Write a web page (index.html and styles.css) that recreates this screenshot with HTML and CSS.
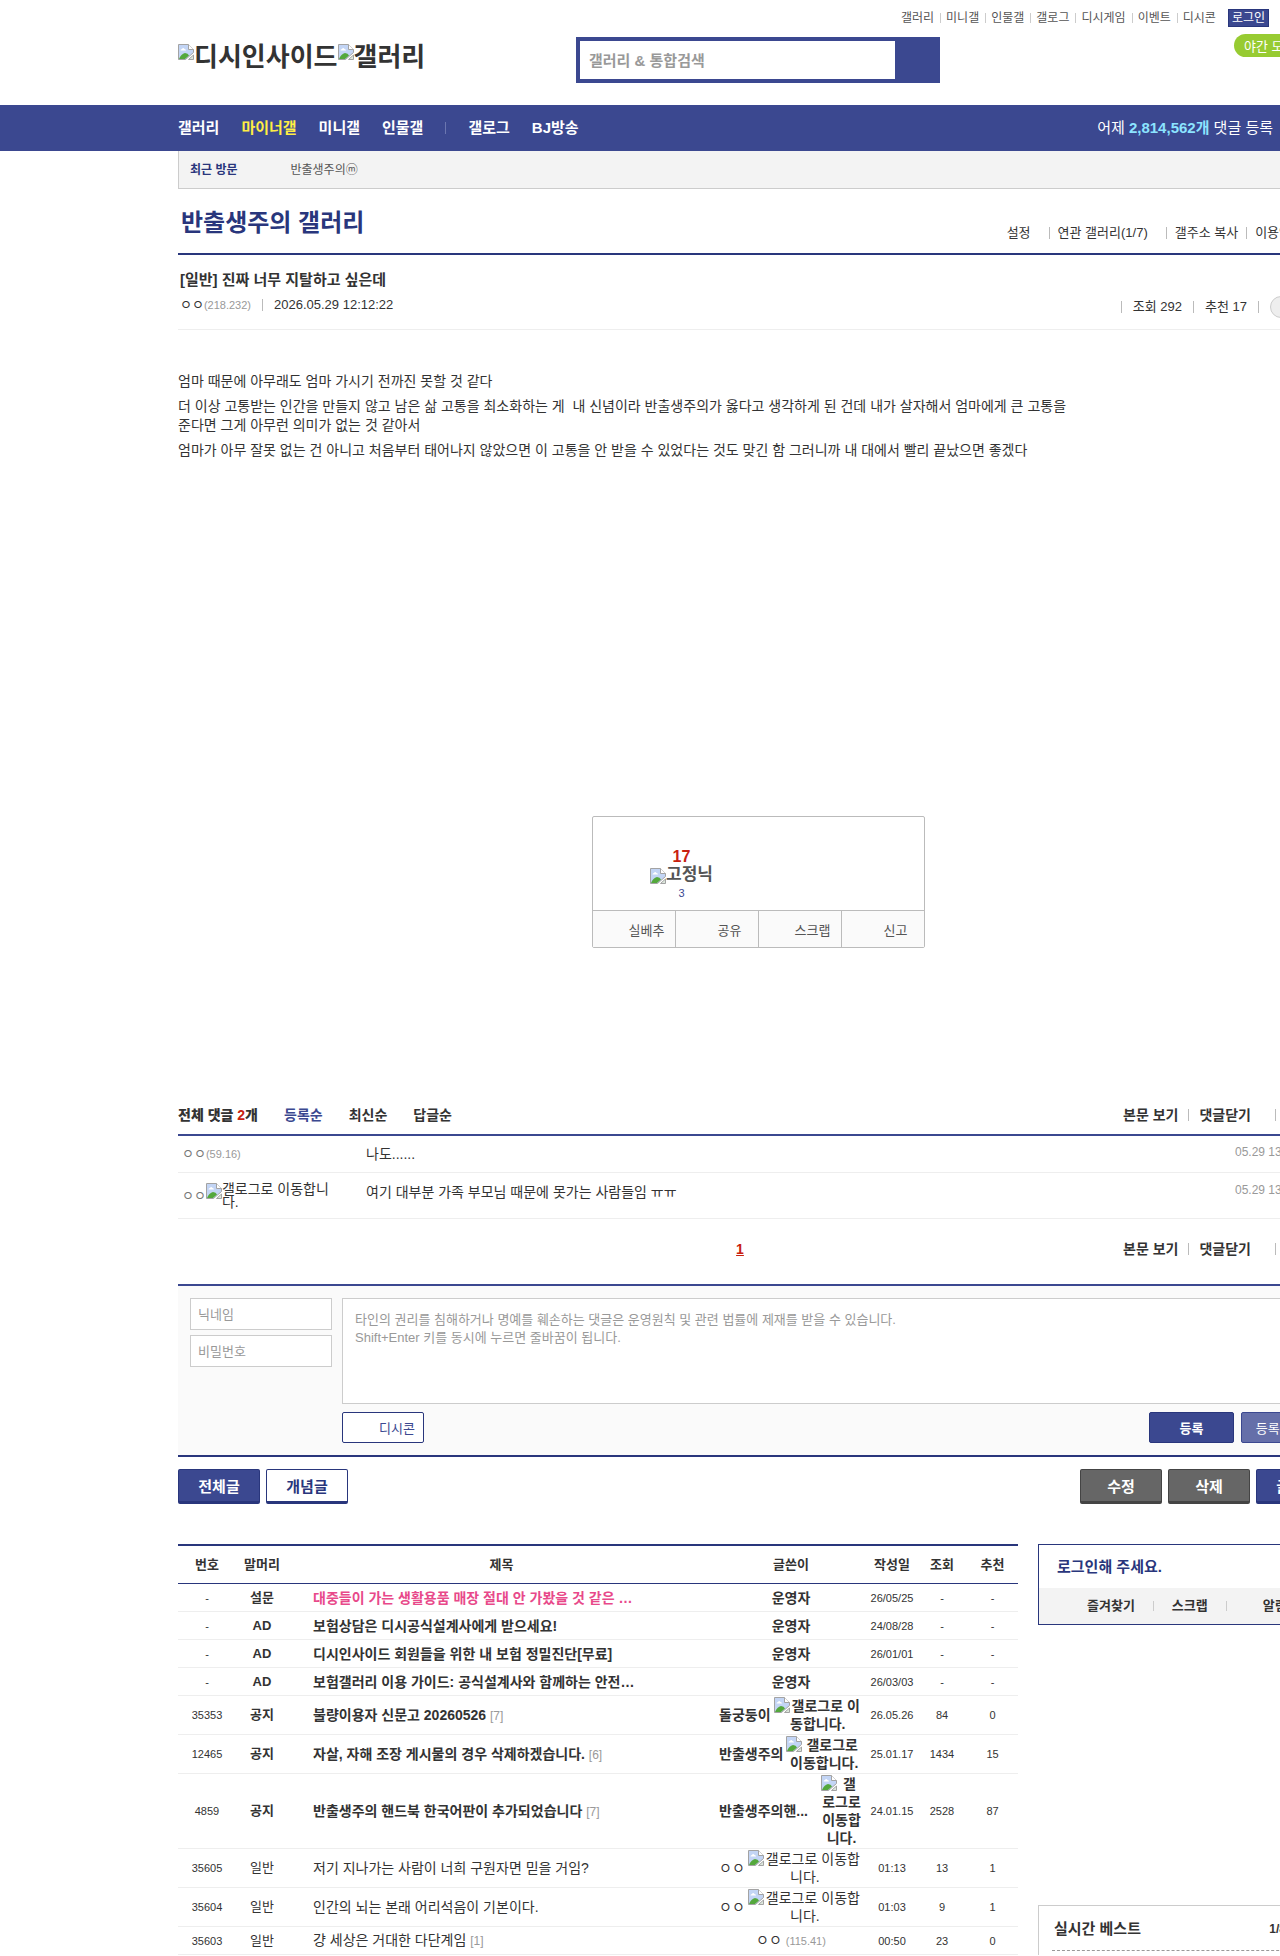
FILE: index.html
```html
<!DOCTYPE html>
<html lang="ko">
<head>
  <meta charset="utf-8">
  <title>반출생주의 갤러리</title>
  <link rel="stylesheet" href="styles.css">
</head>
<body>
  <svg class="defs" aria-hidden="true">
    <symbol id="noimg" viewBox="0 0 16 16">
      <path d="M.5.5h10l5 5v3l-8 7h-7z" fill="#c3d5f5" stroke="#a3a3a3"/>
      <path d="M2.5 6.5q0-1.500 1.500-1.500q1-2 2.500 0q1.500 0 1.500 1.500z" fill="#fff"/>
      <path d="M1 15q2-5 6-6q3 0 4 2.500l-4 3.500z" fill="#54a83c"/>
      <path d="M10.500.5v5h5" fill="#fff" stroke="#a3a3a3"/>
      <path d="M15.500 11v4.500h-5z" fill="#dce7dc" stroke="#a3a3a3"/>
    </symbol>
  </svg>

  <header class="wrap">
    <ul class="util">
      <li><a href="#">갤러리</a></li>
      <li><a href="#">미니갤</a></li>
      <li><a href="#">인물갤</a></li>
      <li><a href="#">갤로그</a></li>
      <li><a href="#">디시게임</a></li>
      <li><a href="#">이벤트</a></li>
      <li><a href="#">디시콘</a></li>
      <li class="login"><a href="#">로그인</a></li>
    </ul>
    <div class="head">
      <h1 class="logo"><a href="#"><svg><use href="#noimg"/></svg>디시인사이드</a><a href="#"><svg><use href="#noimg"/></svg>갤러리</a></h1>
      <form class="search">
        <input type="text" placeholder="갤러리 &amp; 통합검색" aria-label="갤러리 &amp; 통합검색">
        <button type="button" aria-label="검색"></button>
      </form>
      <button type="button" class="night">야간 모드</button>
    </div>
  </header>

  <nav class="gnb">
    <div class="wrap gnb-in">
      <a href="#">갤러리</a>
      <a href="#" class="on">마이너갤</a>
      <a href="#">미니갤</a>
      <a href="#">인물갤</a>
      <i></i>
      <a href="#">갤로그</a>
      <a href="#">BJ방송</a>
      <p>어제 <b>2,814,562개</b> 댓글 등록</p>
    </div>
  </nav>

  <div class="wrap">
    <div class="visit"><b>최근 방문</b><a href="#">반출생주의ⓜ</a></div>

    <div class="gall-head">
      <h2><a href="#">반출생주의 갤러리</a></h2>
      <ul class="bar opts">
        <li class="wide"><a href="#">설정</a></li>
        <li class="wide"><a href="#">연관 갤러리(1/7)</a></li>
        <li><a href="#">갤주소 복사</a></li>
        <li><a href="#">이용안내</a></li>
      </ul>
    </div>

    <article>
      <div class="view-head">
        <h3>[일반] 진짜 너무 지탈하고 싶은데</h3>
        <div class="meta">
          <span>ㅇㅇ<small>(218.232)</small></span>
          <span class="date">2026.05.29 12:12:22</span>
          <ul class="bar count">
            <li>조회 292</li>
            <li>추천 17</li>
            <li><a href="#" class="pill"></a></li>
          </ul>
        </div>
      </div>
      <div class="post">
        <p>엄마 때문에 아무래도 엄마 가시기 전까진 못할 것 같다</p>
        <p>더 이상 고통받는 인간을 만들지 않고 남은 삶 고통을 최소화하는 게&nbsp; 내 신념이라 반출생주의가 옳다고 생각하게 된 건데 내가 살자해서 엄마에게 큰 고통을 준다면 그게 아무런 의미가 없는 것 같아서</p>
        <p>엄마가 아무 잘못 없는 건 아니고 처음부터 태어나지 않았으면 이 고통을 안 받을 수 있었다는 것도 맞긴 함 그러니까 내 대에서 빨리 끝났으면 좋겠다</p>
      </div>
      <div class="vote">
        <div class="vote-num">
          <strong>17</strong>
          <b><svg><use href="#noimg"/></svg>고정닉</b>
          <small>3</small>
        </div>
        <div class="vote-btns">
          <button type="button">실베추</button>
          <button type="button">공유</button>
          <button type="button">스크랩</button>
          <button type="button">신고</button>
        </div>
      </div>
    </article>

    <section class="comments">
      <div class="cmt-head">
        <b>전체 댓글 <em>2</em>개</b>
        <a href="#" class="on">등록순</a>
        <a href="#">최신순</a>
        <a href="#">답글순</a>
        <ul class="bar cmt-opts">
          <li><a href="#">본문 보기</a></li>
          <li class="wide"><a href="#">댓글닫기</a></li>
          <li></li>
        </ul>
      </div>
      <ul class="cmt-list">
        <li>
          <div class="nick">ㅇㅇ<small>(59.16)</small></div>
          <p>나도......</p>
          <time>05.29 13:03:21</time>
        </li>
        <li>
          <div class="nick two">ㅇㅇ<span class="alt"><svg><use href="#noimg"/></svg><span>갤로그로 이동합니다.</span></span></div>
          <p>여기 대부분 가족 부모님 때문에 못가는 사람들임 ㅠㅠ</p>
          <time>05.29 13:10:45</time>
        </li>
      </ul>
      <div class="cmt-foot">
        <a href="#" class="page">1</a>
        <ul class="bar cmt-opts">
          <li><a href="#">본문 보기</a></li>
          <li class="wide"><a href="#">댓글닫기</a></li>
          <li></li>
        </ul>
      </div>
      <form class="write">
        <div class="who">
          <input type="text" placeholder="닉네임" aria-label="닉네임">
          <input type="password" placeholder="비밀번호" aria-label="비밀번호">
        </div>
        <div class="body">
          <textarea aria-label="댓글" placeholder="타인의 권리를 침해하거나 명예를 훼손하는 댓글은 운영원칙 및 관련 법률에 제재를 받을 수 있습니다.&#10;Shift+Enter 키를 동시에 누르면 줄바꿈이 됩니다."></textarea>
          <div class="write-btns">
            <button type="button" class="dccon">디시콘</button>
            <button type="button" class="send">등록</button>
            <button type="button" class="send up">등록+추천</button>
          </div>
        </div>
      </form>
    </section>

    <div class="btns">
      <button type="button" class="btn">전체글</button>
      <button type="button" class="btn white">개념글</button>
      <span></span>
      <button type="button" class="btn gray">수정</button>
      <button type="button" class="btn gray">삭제</button>
      <button type="button" class="btn">글쓰기</button>
    </div>

    <div class="bottom">
      <table class="list">
        <colgroup><col class="c-num"><col class="c-sub"><col><col class="c-writer"><col class="c-s"><col class="c-s"><col class="c-last"></colgroup>
        <thead>
          <tr><th>번호</th><th>말머리</th><th>제목</th><th>글쓴이</th><th>작성일</th><th>조회</th><th>추천</th></tr>
        </thead>
        <tbody>
          <tr class="notice"><td>-</td><td>설문</td><td><a href="#" class="pink">대중들이 가는 생활용품 매장 절대 안 가봤을 것 같은 …</a></td><td>운영자</td><td>26/05/25</td><td>-</td><td>-</td></tr>
          <tr class="notice"><td>-</td><td>AD</td><td><a href="#">보험상담은 디시공식설계사에게 받으세요!</a></td><td>운영자</td><td>24/08/28</td><td>-</td><td>-</td></tr>
          <tr class="notice"><td>-</td><td>AD</td><td><a href="#">디시인사이드 회원들을 위한 내 보험 정밀진단[무료]</a></td><td>운영자</td><td>26/01/01</td><td>-</td><td>-</td></tr>
          <tr class="notice"><td>-</td><td>AD</td><td><a href="#">보험갤러리 이용 가이드: 공식설계사와 함께하는 안전…</a></td><td>운영자</td><td>26/03/03</td><td>-</td><td>-</td></tr>
          <tr class="notice"><td>35353</td><td>공지</td><td><a href="#">불량이용자 신문고 20260526</a> <small>[7]</small></td><td><div class="writer"><span>돌궁둥이</span><div><svg><use href="#noimg"/></svg>갤로그로 이동합니다.</div></div></td><td>26.05.26</td><td>84</td><td>0</td></tr>
          <tr class="notice"><td>12465</td><td>공지</td><td><a href="#">자살, 자해 조장 게시물의 경우 삭제하겠습니다.</a> <small>[6]</small></td><td><div class="writer"><span>반출생주의</span><div><svg><use href="#noimg"/></svg>갤로그로 이동합니다.</div></div></td><td>25.01.17</td><td>1434</td><td>15</td></tr>
          <tr class="notice"><td>4859</td><td>공지</td><td><a href="#">반출생주의 핸드북 한국어판이 추가되었습니다</a> <small>[7]</small></td><td><div class="writer"><span class="long">반출생주의핸...</span><div><svg><use href="#noimg"/></svg>갤로그로 이동합니다.</div></div></td><td>24.01.15</td><td>2528</td><td>87</td></tr>
          <tr><td>35605</td><td>일반</td><td><a href="#">저기 지나가는 사람이 너희 구원자면 믿을 거임?</a></td><td><div class="writer"><span>ㅇㅇ</span><div><svg><use href="#noimg"/></svg>갤로그로 이동합니다.</div></div></td><td>01:13</td><td>13</td><td>1</td></tr>
          <tr><td>35604</td><td>일반</td><td><a href="#">인간의 뇌는 본래 어리석음이 기본이다.</a></td><td><div class="writer"><span>ㅇㅇ</span><div><svg><use href="#noimg"/></svg>갤로그로 이동합니다.</div></div></td><td>01:03</td><td>9</td><td>1</td></tr>
          <tr><td>35603</td><td>일반</td><td><a href="#">걍 세상은 거대한 다단계임</a> <small>[1]</small></td><td>ㅇㅇ <small class="ip">(115.41)</small></td><td>00:50</td><td>23</td><td>0</td></tr>
        </tbody>
      </table>

      <aside>
        <div class="login-box">
          <a href="#">로그인해 주세요.</a>
          <ul>
            <li>즐겨찾기</li>
            <li>스크랩</li>
            <li>알림</li>
          </ul>
        </div>
        <div class="best">
          <h4>실시간 베스트 <span>1/8</span></h4>
        </div>
      </aside>
    </div>
  </div>
</body>
</html>
```
FILE: styles.css
```css
* {
  margin: 0;
  padding: 0;
  box-sizing: border-box;
}
html {
  overflow-x: hidden;
}
body {
  min-width: 1516px;
  overflow: hidden;
  background: #fff;
  color: #333;
  font: 14px/18px "Liberation Sans", Arial, "Noto Sans CJK KR", sans-serif;
}
a {
  color: inherit;
  text-decoration: none;
}
ul {
  list-style: none;
}
em, i {
  font-style: normal;
}
svg {
  width: 16px;
  height: 16px;
}
.defs {
  position: absolute;
  width: 0;
  height: 0;
}
button, input, textarea {
  font-family: inherit;
  font-size: 13px;
}
button {
  cursor: pointer;
}
input::placeholder, textarea::placeholder {
  color: #999;
}
.wrap {
  max-width: 1160px;
  margin: 0 auto;
}

/* header */
.util {
  display: flex;
  justify-content: flex-end;
  padding: 9px 69px 0 0;
  font-size: 12px;
  color: #555;
}
.util li {
  display: flex;
  align-items: center;
}
.util li + li:not(.login)::before {
  content: "";
  width: 1px;
  height: 10px;
  margin: 0 5px 0 6px;
  background: #ccc;
}
.util .login {
  margin-left: 12px;
  padding: 0 3px;
  border: 1px solid #29367c;
  background: #3b4890;
  color: #fff;
  line-height: 16px;
}
.head {
  display: flex;
  height: 78px;
  padding-top: 7px;
}
.logo {
  width: 398px;
  padding-top: 2px;
  font-size: 26px;
  line-height: 42px;
}
.logo svg {
  margin-bottom: 6px;
}
.search {
  display: flex;
  width: 364px;
  height: 46px;
  margin-top: 3px;
  border: 4px solid #3b4890;
  background: #3b4890;
}
.search input {
  flex: 1;
  padding: 0 9px;
  border: 0;
  font-size: 15px;
  font-weight: bold;
}
.search button {
  width: 41px;
  border: 0;
  background: #3b4890;
}
.night {
  height: 23px;
  width: 104px;
  margin-left: auto;
  padding: 0 10px;
  border: 0;
  border-radius: 12px;
  background: #97cb32;
  color: #fff;
  text-align: left;
}
.gnb {
  background: #3b4890;
  color: #fff;
  font-size: 15px;
}
.gnb-in {
  display: flex;
  align-items: center;
  gap: 22px;
  height: 46px;
}
.gnb a {
  font-weight: bold;
}
.gnb .on {
  color: #ffed44;
}
.gnb i {
  width: 1px;
  height: 12px;
  background: #6b76b0;
}
.gnb p {
  margin-left: auto;
  padding-right: 65px;
}
.gnb p b {
  color: #8ce4ff;
}
.visit {
  display: flex;
  align-items: center;
  gap: 53px;
  height: 38px;
  padding-left: 11px;
  border: 1px solid #ccc;
  border-top: 0;
  background: #f3f3f3;
  font-size: 12px;
  color: #555;
}
.visit b {
  color: #29367c;
}

/* gallery title, view */
.bar {
  display: flex;
  margin-left: auto;
}
.bar li {
  display: flex;
  align-items: center;
}
.bar li::before {
  content: "";
  width: 1px;
  height: 12px;
  margin: 0 10px;
  background: #bbb;
}
.gall-head {
  display: flex;
  align-items: flex-end;
  height: 66px;
  padding: 0 3px 11px;
  border-bottom: 2px solid #29367c;
}
.gall-head h2 {
  padding-bottom: 4px;
  color: #29367c;
  font-size: 24px;
  line-height: 30px;
}
.opts {
  padding-right: 32px;
  font-size: 13px;
}
.opts li::before {
  margin: 0 8px;
}
.opts li:first-child::before {
  display: none;
}
.opts .wide {
  padding-right: 10px;
}
.view-head {
  padding: 16px 0 0 2px;
  border-bottom: 1px solid #eee;
}
.view-head h3 {
  font-size: 15px;
}
.meta {
  display: flex;
  align-items: flex-start;
  height: 40px;
  padding-top: 7px;
  font-size: 13px;
}
.meta small {
  color: #999;
  font-size: 11px;
}
.date {
  display: flex;
  align-items: center;
}
.date::before {
  content: "";
  width: 1px;
  height: 12px;
  margin: 0 11px;
  background: #bbb;
}
.count {
  height: 22px;
}
.count li::before {
  margin: 0 11px;
}
.pill {
  width: 68px;
  height: 22px;
  border: 1px solid #ccc;
  border-radius: 11px;
  background: #eee;
}
.post {
  max-width: 900px;
  min-height: 486px;
  padding-top: 42px;
  line-height: 19px;
}
.post p {
  margin-bottom: 6px;
}
.vote {
  max-width: 333px;
  margin: 0 auto;
  border: 1px solid #bbb;
  border-radius: 2px;
}
.vote-num {
  width: 178px;
  height: 93px;
  padding-top: 31px;
  text-align: center;
}
.vote-num > * {
  display: block;
}
.vote-num strong {
  color: #c8200f;
  font-size: 16px;
}
.vote-num b {
  color: #555;
  font-size: 17px;
}
.vote-num svg {
  vertical-align: -4px;
}
.vote-num small {
  color: #3b4890;
  font-size: 11px;
}
.vote-btns {
  display: flex;
  border-top: 1px solid #bbb;
}
.vote-btns button {
  flex: 1;
  height: 36px;
  padding-left: 26px;
  border: 0;
  background: #fafafa;
  color: #555;
}
.vote-btns button + button {
  border-left: 1px solid #bbb;
}

/* comments */
.comments {
  padding-top: 149px;
}
.cmt-head {
  display: flex;
  align-items: center;
  gap: 26px;
  height: 39px;
  padding-bottom: 2px;
  border-bottom: 2px solid #3b4890;
  font-weight: bold;
}
.cmt-head em {
  color: #c8200f;
}
.cmt-head .on {
  color: #3b4890;
}
.cmt-opts {
  width: 226px;
  white-space: nowrap;
  font-weight: bold;
}
.cmt-opts li:first-child::before {
  margin-left: 0;
  background: none;
}
.cmt-opts .wide {
  padding-right: 14px;
}
.cmt-list li {
  display: flex;
  padding: 9px 0 9px 4px;
  border-bottom: 1px solid #eee;
}
.cmt-list li + li {
  padding-top: 10px;
}
.nick {
  width: 184px;
  padding-right: 28px;
  color: #777;
  font-size: 13px;
}
.nick small {
  color: #999;
  font-size: 11px;
}
.two {
  display: flex;
  align-items: center;
}
.alt {
  display: flex;
  flex: 1;
  align-items: flex-start;
  color: #333;
  font-size: 14px;
  line-height: 13px;
}
.alt svg {
  flex: none;
}
.alt span {
  width: 112px;
  word-break: break-all;
}
.cmt-list time {
  width: 103px;
  margin-left: auto;
  color: #999;
  font-size: 12px;
  line-height: 15px;
}
.cmt-foot {
  display: flex;
  align-items: center;
  height: 65px;
  padding-bottom: 6px;
}
.page {
  width: 934px;
  padding-left: 190px;
  color: #c8200f;
  font-weight: bold;
  text-align: center;
  text-decoration: underline;
}
.write {
  display: flex;
  gap: 10px;
  padding: 12px;
  border-top: 2px solid #3b4890;
  border-bottom: 2px solid #29367c;
  background: #fafafa;
}
.who {
  width: 142px;
}
.who input {
  display: block;
  width: 100%;
  height: 32px;
  margin-bottom: 5px;
  padding: 0 7px;
  border: 1px solid #ccc;
}
.body {
  flex: 1;
}
.body textarea {
  display: block;
  width: 100%;
  height: 106px;
  padding: 12px;
  border: 1px solid #ccc;
  line-height: 18px;
  resize: none;
}
.write-btns {
  display: flex;
  gap: 7px;
  padding-top: 8px;
}
.write-btns button {
  height: 31px;
  border: 1px solid #29367c;
  border-radius: 2px;
}
.dccon {
  width: 82px;
  margin-right: auto;
  padding-left: 28px;
  background: #fff;
  color: #3b4890;
}
.send {
  width: 85px;
  background: #3b4890;
  color: #fff;
  font-weight: bold;
}
.write-btns .up {
  border-color: #3b4890;
  background: #656fa9;
  font-weight: normal;
}
.btns {
  display: flex;
  gap: 6px;
  padding: 12px 0 40px;
}
.btns span {
  flex: 1;
}
.btn {
  width: 82px;
  height: 35px;
  border: 1px solid #29367c;
  border-bottom-width: 3px;
  border-radius: 2px;
  background: #3b4890;
  color: #fff;
  font-size: 15px;
  font-weight: bold;
}
.white {
  background: #fff;
  color: #29367c;
}
.gray {
  border-color: #444;
  background: #666;
}

/* list */
.bottom {
  display: flex;
  gap: 20px;
}
.list {
  flex: 1;
  table-layout: fixed;
  border-spacing: 0;
  border-top: 2px solid #29367c;
}
.c-num {
  width: 58px;
}
.c-sub {
  width: 52px;
}
.c-writer {
  width: 152px;
}
.c-s {
  width: 50px;
}
.c-last {
  width: 51px;
}
.list th {
  height: 38px;
  border-bottom: 1px solid #29367c;
  font-size: 13px;
}
.list td {
  height: 28px;
  padding: 1px 0;
  border-bottom: 1px solid #eee;
  font-size: 11px;
  text-align: center;
}
.list td:nth-child(2) {
  font-size: 13px;
}
.list td:nth-child(3) {
  padding-left: 25px;
  font-size: 14px;
  text-align: left;
  white-space: nowrap;
}
.list td:nth-child(4) {
  font-size: 14px;
}
.notice td:nth-child(2), .notice td:nth-child(3), .notice td:nth-child(4) {
  font-weight: bold;
}
.list small {
  color: #999;
  font-size: 12px;
  font-weight: normal;
}
.list .ip {
  font-size: 11px;
}
.pink {
  color: #e8498a;
}
.writer {
  display: flex;
  align-items: center;
  padding: 0 5px 0 4px;
}
.writer span {
  margin-right: 3px;
}
.writer .long {
  width: 99px;
  text-align: left;
}
.writer div {
  flex: 1;
  word-break: break-all;
}
.writer svg {
  float: left;
}

/* side */
aside {
  display: flex;
  flex-direction: column;
  justify-content: space-between;
  width: 300px;
}
.login-box {
  border: 1px solid #29367c;
}
.login-box a {
  display: block;
  padding: 0 18px;
  color: #29367c;
  font-size: 15px;
  font-weight: bold;
  line-height: 43px;
}
.login-box ul {
  display: flex;
  height: 36px;
  align-items: center;
  padding-left: 48px;
  background: #f3f3f3;
  font-size: 13px;
  font-weight: bold;
}
.login-box li + li {
  display: flex;
  align-items: center;
}
.login-box li + li::before {
  content: "";
  width: 1px;
  height: 10px;
  margin: 0 18px;
  background: #ccc;
}
.login-box li:last-child::before {
  margin-right: 36px;
}
.best {
  height: 50px;
  padding: 0 13px;
  border: 1px solid #ccc;
  border-bottom: 0;
}
.best h4 {
  display: flex;
  height: 45px;
  align-items: center;
  justify-content: space-between;
  padding: 2px 38px 0 2px;
  border-bottom: 1px dashed #999;
  font-size: 15px;
}
.best span {
  font-size: 12px;
}
```
